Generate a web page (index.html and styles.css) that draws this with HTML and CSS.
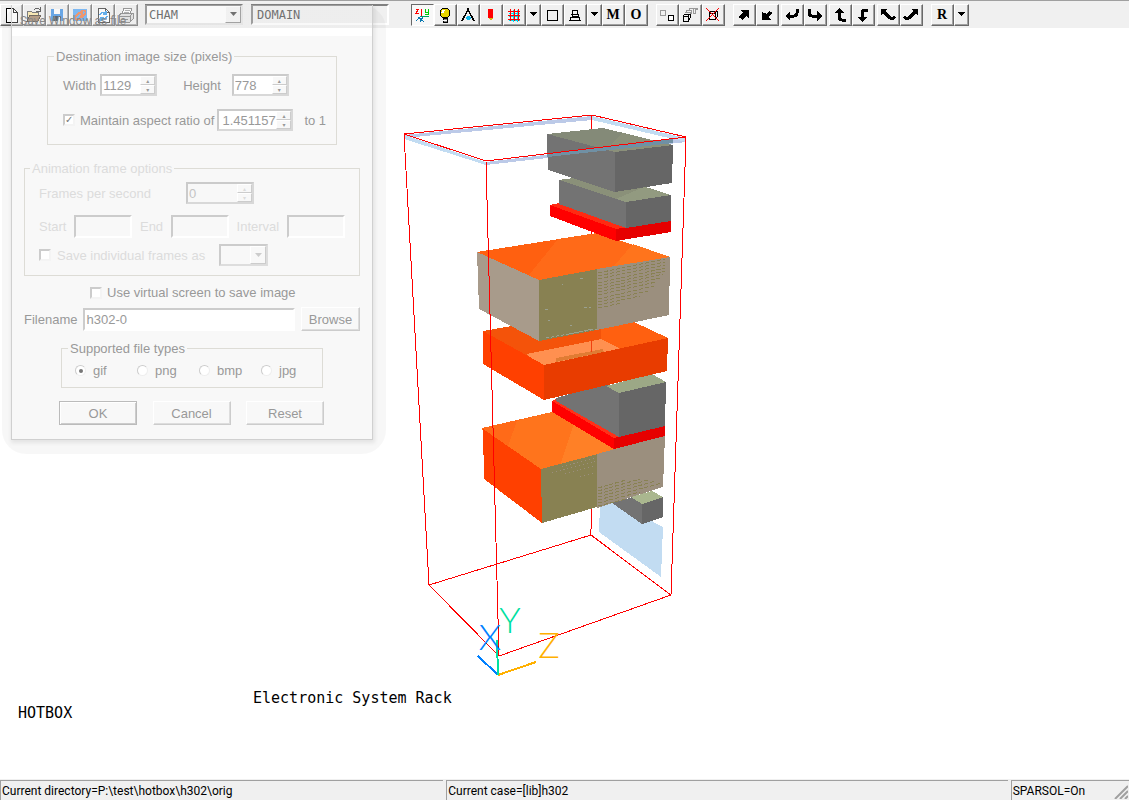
FILE: index.html
```html
<!DOCTYPE html>
<html lang="en">
<head>
<meta charset="utf-8">
<title>HOTBOX - Electronic System Rack</title>
<link rel="stylesheet" href="styles.css">
</head>
<body>
<div class="app">
  <header class="toolbar">
    <div class="group">
      <button class="tool" aria-label="New"><svg viewBox="0 0 16 16"><path d="M3 1h7l4 4v10H3z" fill="#fff" stroke="#000"/><path d="M10 1v4h4" fill="none" stroke="#000"/></svg></button>
      <button class="tool" aria-label="Open"><svg viewBox="0 0 16 16"><path d="M1 14V4h4l1 1h6v3" fill="#fbe7a2" stroke="#555"/><path d="M1 14l3-6h11l-3 6z" fill="#a08060" stroke="#443a30"/><path d="M8 3q3-4 6 0M14 0v4h-4" fill="none" stroke="#333"/></svg></button>
      <button class="tool" aria-label="Save"><svg viewBox="0 0 16 16"><path d="M2 2h12v12H2z" fill="#398ee5"/><path d="M5 2h6v5H5z" fill="#fff"/><path d="M4 9h8v5H4z" fill="#23364a"/><path d="M9 10h2v4H9z" fill="#fff"/></svg></button>
      <button class="tool" aria-label="Save window as image"><svg viewBox="0 0 16 16"><path d="M1 2h14v12H1z" fill="#55a6f6"/><path d="M4 9l3-3q2-2 3 0t-1 3l-2 3q-2 2-3 0t0-3zM7 7l3-3q2-1 3 0t0 3l-4 4" fill="none" stroke="#f07840" stroke-width="1.500"/></svg></button>
      <button class="tool" aria-label="Reload"><svg viewBox="0 0 16 16"><path d="M3 1h7l4 4v10H3z" fill="#fff" stroke="#333"/><path d="M10 1v4h4" fill="none" stroke="#333"/><path d="M5 8q1-4 5-2M11 4v3H8M12 9q-1 4-5 3M6 14v-3h3" fill="none" stroke="#3198ee" stroke-width="1.5"/></svg></button>
      <button class="tool" aria-label="Print"><svg viewBox="0 0 16 16"><path d="M4 7l2-6h8l-2 6z" fill="#fff" stroke="#777"/><path d="M7 3h5M6 5h5" stroke="#999"/><path d="M1 8l3-2h11v6l-3 3H1z" fill="#ddd" stroke="#777"/><path d="M1 9h11v6M12 9l3-3M3 12h7" fill="none" stroke="#777"/></svg></button>
    </div>
    <div class="combo">
      <select aria-label="Domain owner"><option>CHAM</option></select>
      <span class="combo-arrow"><svg viewBox="0 0 9 5"><path d="M1 0h7L4.500 4z"/></svg></span>
    </div>
    <input class="object-name" type="text" value="DOMAIN" aria-label="Object name">
    <div class="group">
      <button class="tool pressed" aria-label="Axes"><svg viewBox="0 0 16 16"><path d="M2 2h3L2 6h3" fill="none" stroke="#f00"/><path d="M7 2v7" stroke="#f00"/><path d="M7 9h8" stroke="#00a060"/><path d="M11 2v3h3M14 2v5h-3" fill="none" stroke="#0c0"/><path d="M7 9l-5 5M4 10l6 5M9 10l-3 5" stroke="#0878b0"/></svg></button>
      <button class="tool" aria-label="Light"><svg viewBox="0 0 16 16"><circle cx="8" cy="6" r="5" fill="#e8d400" stroke="#000"/><path d="M7 3l-2 3" stroke="#fff" stroke-width="2"/><path d="M6 11h4v4H6z" fill="#888" stroke="#000"/><path d="M6 13h4" stroke="#fff"/></svg></button>
      <button class="tool" aria-label="Compass"><svg viewBox="0 0 16 16"><path d="M2 14l2-4 4-7 4 7 2 4" fill="none" stroke="#000" stroke-width="1.500"/><path d="M5 11q3-4 6 0l-2 2H7z" fill="#14b8e8"/><path d="M7 1h2v3H7z"/></svg></button>
      <button class="tool" aria-label="Pencil"><svg viewBox="0 0 16 16"><path d="M5 2h5v9H5z" fill="#f00"/><path d="M5 11h5l-2 3z" fill="#d8b818"/></svg></button>
      <button class="tool" aria-label="Mesh"><svg viewBox="0 0 16 16"><path d="M3 6h11M3 9h11M3 13h11M7 3v12M11 3v12" stroke="#00dcf0"/><path d="M4 2v12M8 2v12M12 2v12M2 4h12M2 8h12M2 12h12" stroke="#f00"/></svg></button>
      <button class="tool drop" aria-label="Mesh options"><svg viewBox="0 0 9 5"><path d="M1 0h7L4.500 4z"/></svg></button>
      <button class="tool" aria-label="Box"><svg viewBox="0 0 16 16"><path d="M3 3h10v10H3z" fill="none" stroke="#000"/></svg></button>
      <button class="tool" aria-label="Perspective"><svg viewBox="0 0 16 16"><path d="M6 3h4l1 4H5zM5 7v2h6V7M4 10h8l1 3H3z" fill="none" stroke="#000"/></svg></button>
      <button class="tool drop" aria-label="Perspective options"><svg viewBox="0 0 9 5"><path d="M1 0h7L4.500 4z"/></svg></button>
      <button class="tool letter">M</button>
      <button class="tool letter">O</button>
    </div>
    <div class="group spaced">
      <button class="tool" aria-label="Duplicate"><svg viewBox="0 0 16 16"><path d="M1 3h5v5H1z" fill="none" stroke="#999"/><path d="M9 8h5v5H9z" fill="#fff" stroke="#000"/></svg></button>
      <button class="tool" aria-label="Array"><svg viewBox="0 0 16 16"><path d="M4 5V3h5v4M7 3V1h8v1h-2v4h-2M11 2v5M3 5h5v2" fill="none" stroke="#999"/><path d="M1 9h5v5H1zM1 9l2-2h5v4l-2 3M6 9l2-2" fill="none" stroke="#000"/></svg></button>
      <button class="tool" aria-label="Delete"><svg viewBox="0 0 16 16"><path d="M4 6h6v6H4zM4 6l2-2h6v6l-2 2M10 6l2-2" fill="none" stroke="#000"/><path d="M1 1l13 13M14 1L1 14" stroke="#f00"/></svg></button>
    </div>
    <div class="group spaced">
      <button class="tool" aria-label="Move up right"><svg viewBox="0 0 16 16"><path d="M4 3h9v8l-3-2-4 4-1-2H3V9l4-3z"/></svg></button>
      <button class="tool" aria-label="Move down left"><svg viewBox="0 0 16 16"><path d="M3 5v8h9l-3-3 4-3V5h-2V3L8 7z"/></svg></button>
    </div>
    <div class="group tight">
      <button class="tool" aria-label="Rotate left"><svg viewBox="0 0 16 16"><path d="M13 2v4q0 3-3 3H4" fill="none" stroke="#000" stroke-width="3"/><path d="M1 9l5-5v10z"/></svg></button>
      <button class="tool" aria-label="Rotate right"><svg viewBox="0 0 16 16"><path d="M2 2v4q0 3 3 3h6" fill="none" stroke="#000" stroke-width="3"/><path d="M15 9l-5-5v10z"/></svg></button>
    </div>
    <div class="group tight">
      <button class="tool" aria-label="Rotate up"><svg viewBox="0 0 16 16"><path d="M7 4v6q0 3 3 3h4" fill="none" stroke="#000" stroke-width="3"/><path d="M7 1l5 5H2z"/></svg></button>
      <button class="tool" aria-label="Rotate down"><svg viewBox="0 0 16 16"><path d="M13 3h-3q-3 0-3 3v6" fill="none" stroke="#000" stroke-width="3"/><path d="M7 15l5-5H2z"/></svg></button>
    </div>
    <div class="group tight">
      <button class="tool" aria-label="Tilt left"><svg viewBox="0 0 16 16"><path d="M3 4l7 7q2 2 5-1" fill="none" stroke="#000" stroke-width="3"/><path d="M1 2h7L1 8z"/></svg></button>
      <button class="tool" aria-label="Tilt right"><svg viewBox="0 0 16 16"><path d="M13 4l-7 7q-2 2-5-1" fill="none" stroke="#000" stroke-width="3"/><path d="M15 2H8l7 6z"/></svg></button>
    </div>
    <div class="group spaced">
      <button class="tool letter">R</button>
      <button class="tool drop" aria-label="Reset options"><svg viewBox="0 0 9 5"><path d="M1 0h7L4.500 4z"/></svg></button>
    </div>
  </header>

  <main class="viewport">
    <svg class="scene" viewBox="0 28 1129 751" preserveAspectRatio="xMinYMin meet" role="img" aria-label="Electronic rack model">
      <!-- lid bands -->
      <path d="M404 135L592 116V120L404 138zM486 162L686 138V142L486 165z" fill="#bccae8"/>
      <path d="M592 116L686 138V142L592 120zM404 135L486 162V165L404 139z" fill="#c2dcf2"/>
      <path d="M592 115L591 535" stroke="#f00"/>
      <path d="M600 505L612 500L663 527L661 577L599 532z" fill="#c2dcf2"/>
      <!-- bottom unit -->
      <path d="M612 503L633 497L642 504V524z" fill="#737373"/>
      <path d="M642 504L663 497V517L642 524z" fill="#666"/>
      <path d="M631 497L652 491L663 497L642 504z" fill="#aab78f"/>
      <!-- lower card cage -->
      <path d="M482 428L552 412L600 410L665 437L541 472L483 431z" fill="#ff6a18"/>
      <path d="M517 421L552 412L665 437L541 470L508 446z" fill="#ff741c"/>
      <path d="M574 424L665 437L560 465z" fill="#ff8026"/>
      <path d="M483 429L541 469L542 523L484 479z" fill="#ff4000"/>
      <path d="M541 469L598 454L597 507L542 523z" fill="#888152"/>
      <path d="M597 454L665 435L663 487L597 508z" fill="#9b8f7e"/>
      <g class="grain" stroke="#888152">
        <path d="M598 488L626 480M598 491L640 479M598 494L648 480M598 497L656 481M598 500L662 483M598 503L640 492M598 506L626 499"/>
      </g>
      <path d="M552 473L596 461M565 474L596 466M580 477L596 473M562 467L596 458" stroke="#9b8f7e" stroke-dasharray="1 3"/>
      <!-- lower board and chassis -->
      <path d="M552 401L558 398L620 437L614 440L552 403z" fill="#ff3018"/>
      <path d="M552 401L614 438V449L552 412z" fill="#f00"/>
      <path d="M614 438L665 425V436L614 449z" fill="#e60000"/>
      <path d="M556 398L606 384L619 393V437L556 401z" fill="#737373"/>
      <path d="M619 393L666 382L665 426L619 437z" fill="#666"/>
      <path d="M606 386L652 374L666 382L619 393z" fill="#9ca886"/>
      <!-- open tray -->
      <path d="M483 331L512 326L600 310L634 322L668 338L544 367L483 333z" fill="#f4530a"/>
      <path d="M601 329L634 322L668 338L619 350L601 341z" fill="#ff6010"/>
      <path d="M526 354L601 339L619 348V350L543 367z" fill="#ff9050"/>
      <path d="M556 358L603 349L604 352L556 362z" fill="#e07c34"/>
      <path d="M591 340V352" stroke="#f04010"/>
      <path d="M483 331L544 365V400L483 364z" fill="#ff4000"/>
      <path d="M544 365L668 338L667 371L544 400z" fill="#e83c00"/>
      <!-- upper card cage -->
      <path d="M477 252L597 233L670 257L539 282z" fill="#ff6010"/>
      <path d="M558 239L597 233L670 257L539 282L529 275z" fill="#ff6a18"/>
      <path d="M633 244L670 257L613 267z" fill="#ff741c"/>
      <path d="M477 252L539 280V341L479 309z" fill="#a89b8b"/>
      <path d="M539 280L598 269L597 330L539 341z" fill="#888152"/>
      <path d="M597 269L670 257L669 315L597 330z" fill="#9b8f7e"/>
      <g class="grain" stroke="#888152">
        <path d="M598 273L665 259M598 276L665 262M598 279L665 265M598 283L665 268M598 286L665 271M598 289L663 274M598 292L660 278M598 295L656 282M598 299L654 286M598 302L648 291M598 305L640 296M598 308L622 303"/>
      </g>
      <path d="M562 284h1M580 278h4M545 309h3M548 320h2M584 307h7M570 325h2M546 338L597 329M569 334L592 329" stroke="#9aa090" stroke-dasharray="3 2"/>
      <!-- upper board -->
      <path d="M550 205L590 196L671 223L616 231L550 207z" fill="#ff2a12"/>
      <path d="M550 205L616 229V241L550 216z" fill="#f00"/>
      <path d="M616 229L671 221V232L616 241z" fill="#e60000"/>
      <!-- second chassis -->
      <path d="M558 180L605 174L671 195L626 204z" fill="#8a9079"/>
      <path d="M644 187L671 195L626 204L616 199z" fill="#929a80"/>
      <path d="M559 180L626 202V228L559 204z" fill="#737373"/>
      <path d="M626 202L671 195V221L626 228z" fill="#666"/>
      <!-- top chassis -->
      <path d="M547 134L603 128L673 145L615 154z" fill="#848a78"/>
      <path d="M623 133L673 145L615 154L606 149z" fill="#8b907a"/>
      <path d="M547 134L615 152V192L548 170z" fill="#737373"/>
      <path d="M615 152L673 145L672 183L615 192z" fill="#666"/>
      <path d="M547 154L673 139V143L547 157z" fill="#7090a4"/>
      <!-- domain outline -->
      <path d="M404 134L592 115L686 137L486 161zM404 134L429 585L591 535L671 595L499 656L429 585M486 161L499 656M686 137L671 595" fill="none" stroke="#f00"/>
      <!-- axis triad -->
      <g stroke-width="2">
        <path d="M498 675L478 656" stroke="#0080ff"/>
        <path d="M498 675L536 662" stroke="#ffb000"/>
        <path d="M498 675L497 640" stroke="#00e0a0"/>
      </g>
      <g class="axis-names">
        <text x="490" y="650" fill="#0080ff">X</text>
        <text x="510" y="633" fill="#00e0a0">Y</text>
        <text x="549" y="658" fill="#ffb000">Z</text>
      </g>
    </svg>
    <p class="label model-title">Electronic System Rack</p>
    <p class="label case-title">HOTBOX</p>
  </main>

  <footer class="status">
    <div class="pane directory">Current directory=P:\test\hotbox\h302\orig</div>
    <div class="pane case">Current case=[lib]h302</div>
    <div class="pane solver"><span>SPARSOL=On</span><svg class="grip" viewBox="0 0 14 14"><path d="M1 14L14 1M6 14L14 6M11 14L14 11" stroke="#a0a0a0" stroke-width="2"/></svg></div>
  </footer>
</div>

<div class="shadow">
  <form class="dialog" aria-labelledby="dialog-title">
    <h1 class="title" id="dialog-title">Save Window as file</h1>
    <div class="body">
      <fieldset class="size">
        <legend>Destination image size (pixels)</legend>
        <div class="row">
          <label for="width">Width</label>
          <span class="spin"><input id="width" type="text" value="1129"><span class="arrows"><button type="button" aria-label="Increase width">▴</button><button type="button" aria-label="Decrease width">▾</button></span></span>
          <label class="height-label" for="height">Height</label>
          <span class="spin"><input id="height" type="text" value="778"><span class="arrows"><button type="button" aria-label="Increase height">▴</button><button type="button" aria-label="Decrease height">▾</button></span></span>
        </div>
        <div class="row ratio-row">
          <label class="check"><input type="checkbox" checked>Maintain aspect ratio of</label>
          <span class="spin ratio"><input type="text" value="1.451157" aria-label="Aspect ratio"><span class="arrows"><button type="button" aria-label="Increase ratio">▴</button><button type="button" aria-label="Decrease ratio">▾</button></span></span>
          <span class="to-one">to 1</span>
        </div>
      </fieldset>

      <fieldset class="animation" disabled>
        <legend>Animation frame options</legend>
        <div class="row">
          <label class="fps-label" for="fps">Frames per second</label>
          <span class="spin fps"><input id="fps" type="text" value="0"><span class="arrows"><button type="button" aria-label="Increase frames">▴</button><button type="button" aria-label="Decrease frames">▾</button></span></span>
        </div>
        <div class="row range">
          <label for="start">Start</label><input class="field" id="start" type="text">
          <label for="end">End</label><input class="field" id="end" type="text">
          <label for="interval">Interval</label><input class="field" id="interval" type="text">
        </div>
        <div class="row">
          <label class="check"><input type="checkbox">Save individual frames as</label>
          <span class="combo small"><select aria-label="Frame format"><option></option></select><span class="combo-arrow"><svg viewBox="0 0 9 5"><path d="M1 0h7L4.500 4z"/></svg></span></span>
        </div>
      </fieldset>

      <label class="check virtual"><input type="checkbox">Use virtual screen to save image</label>

      <div class="row file">
        <label for="filename">Filename</label>
        <input class="field" id="filename" type="text" value="h302-0">
        <button class="push" type="button">Browse</button>
      </div>

      <fieldset class="types">
        <legend>Supported file types</legend>
        <div class="row">
          <label><input type="radio" name="type" checked>gif</label>
          <label><input type="radio" name="type">png</label>
          <label><input type="radio" name="type">bmp</label>
          <label><input type="radio" name="type">jpg</label>
        </div>
      </fieldset>

      <div class="actions">
        <button class="push default" type="button">OK</button>
        <button class="push" type="button">Cancel</button>
        <button class="push" type="button">Reset</button>
      </div>
    </div>
  </form>
</div>
</body>
</html>
```

FILE: styles.css
```css
* { box-sizing: border-box; }

body {
  margin: 0;
  background: #fff;
  color: #000;
  font: 12px/16px Roboto, "Noto Sans", sans-serif;
}

button, input, select { font: inherit; color: inherit; margin: 0; }

.app { display: flex; flex-direction: column; min-height: 100vh; }

/* Toolbar */
.toolbar {
  display: flex;
  align-items: flex-start;
  height: 28px;
  padding-top: 3px;
  background: #f0f0f0;
  border-top: 1px solid #a0a0a0;
}

.group { display: flex; }
.group.spaced { margin-left: 8px; }
.group.tight { margin-left: 2px; }

.tool {
  display: flex;
  align-items: center;
  justify-content: center;
  width: 23px;
  height: 22px;
  padding: 0 1px 1px 0;
  background: #f0f0f0;
  border: 1px solid;
  border-color: #fff #696969 #696969 #fff;
  box-shadow: inset -1px -1px #a0a0a0;
}

.tool svg { width: 16px; height: 16px; shape-rendering: crispEdges; }
.tool.drop { width: 15px; }
.tool.drop svg { width: 9px; height: 5px; }
.tool.pressed { background: #f8f8f8; border-color: #696969 #fff #fff #696969; box-shadow: none; }
.tool.letter { font: bold 14px/16px "Liberation Serif", serif; }

.combo {
  display: flex;
  position: relative;
  width: 98px;
  height: 21px;
  margin: 0 8px 0 7px;
  background: #fff;
  border: 2px solid;
  border-color: #808080 #e4e4e4 #e4e4e4 #808080;
}

.combo select {
  width: 100%;
  padding: 0 2px;
  appearance: none;
  background: transparent;
  border: 0;
  border-radius: 0;
  font: 12px/16px "DejaVu Sans Mono", monospace;
  color: #444;
  opacity: 1;
}

.combo-arrow {
  position: absolute;
  top: 0;
  right: 0;
  bottom: 0;
  display: flex;
  align-items: center;
  justify-content: center;
  width: 16px;
  background: #f4f4f4;
  border: 1px solid;
  border-color: #fff #888 #888 #fff;
  pointer-events: none;
}

.combo-arrow svg { width: 9px; height: 5px; fill: #444; }

.object-name {
  width: 138px;
  height: 21px;
  margin-right: 22px;
  padding: 0 4px;
  background: #f0f0f0;
  border: 2px solid;
  border-color: #808080 #fff #fff #808080;
  font: 12px/16px "DejaVu Sans Mono", monospace;
  color: #444;
}

/* Model view */
.viewport { position: relative; flex: 1; }
.scene { display: block; width: 100%; shape-rendering: crispEdges; }
.grain { stroke-dasharray: 4 2; }
.axis-names { font: 300 36px Lato, sans-serif; text-anchor: middle; }

.label {
  position: absolute;
  margin: 0;
  font: 15px/18px "DejaVu Sans Mono", monospace;
}

.model-title { left: 253px; top: 661px; }
.case-title { left: 18px; top: 676px; }

/* Status bar */
.status {
  display: flex;
  gap: 3px;
  height: 21px;
  padding-top: 1px;
  background: #f0f0f0;
}

.pane {
  display: flex;
  justify-content: space-between;
  padding: 1px;
  border-top: 1px solid #a0a0a0;
  border-left: 1px solid #a0a0a0;
  line-height: 18px;
  white-space: nowrap;
}

.directory { flex: 443 1 0; }
.case { flex: 562 1 0; }
.solver { flex: 116 1 0; }
.grip { align-self: flex-end; width: 14px; height: 14px; }

/* Fading dialog */
.shadow {
  position: absolute;
  left: 2px;
  top: 5px;
  padding: 0 13px 14px 9px;
  background: rgba(0, 0, 0, 0.03);
  border-radius: 24px;
}

.dialog {
  width: 362px;
  border: 1px solid #d0d0d0;
  border-top: 0;
  box-shadow: 1px 2px 4px 1px rgba(0, 0, 0, 0.08);
  color: #999;
  font: 13px/15px "Liberation Sans", sans-serif;
  white-space: nowrap;
}

.title {
  height: 31px;
  margin: 0;
  padding: 8px;
  background: linear-gradient(rgba(255, 255, 255, 0.25) 23px, #fff 23px);
  font: 12px/16px Roboto, sans-serif;
  color: #888;
}

.body { padding: 13px 12px 14px; background: #f8f8f8; }
.row { display: flex; align-items: center; }

fieldset {
  min-width: 0;
  margin: 0;
  padding: 0 15px;
  border: 1px solid #dddcd6;
}

legend { padding: 0 2px; margin-left: -9px; }

.size { width: 290px; height: 96px; margin-left: 23px; }
.size .row { gap: 4px; margin-top: 10px; }
.size .height-label { margin-left: 22px; margin-right: 7px; }
.size .ratio-row { gap: 3px; margin-top: 13px; }
.to-one { margin-left: 8px; }

.spin {
  display: flex;
  flex: none;
  width: 57px;
  height: 22px;
  background: #fff;
  border: 2px solid;
  border-color: #cbcbcb #d8d8d8 #d8d8d8 #cbcbcb;
}

.spin.ratio { width: 76px; }
.spin input { width: 0; flex: 1; padding: 0 0 0 1px; border: 0; background: transparent; }
.spin.ratio input { padding-left: 3px; }
.arrows { display: flex; flex-direction: column; width: 15px; }

.arrows button {
  flex: 1;
  height: 9px;
  padding: 0;
  background: #f8f8f8;
  border: 1px solid;
  border-color: #fff #ccc #ccc #fff;
  font: 6px/6px "DejaVu Sans", sans-serif;
}

.check { display: flex; align-items: center; gap: 5px; }

input[type="checkbox"] {
  appearance: none;
  display: grid;
  place-items: center;
  width: 12px;
  height: 12px;
  background: #fff;
  border: 2px solid;
  border-color: #ccc #f4f4f4 #f4f4f4 #ccc;
}

input[type="checkbox"]:checked::before {
  content: "✓";
  color: #777;
  font: bold 10px/8px "DejaVu Sans", sans-serif;
}

.animation { width: 336px; height: 115px; margin-top: 16px; padding: 0 14px; color: #dcdcdc; }
.animation .spin, .animation .field, .animation .combo { background: #f8f8f8; }
.animation input { color: #c4c4c4; }
.animation .row { margin-top: 6px; }
.fps-label { width: 147px; }
.spin.fps { width: 68px; }
.animation .range { justify-content: space-between; margin-top: 11px; }
.animation .check { gap: 6px; }
.combo.small {
  width: 49px;
  height: 22px;
  margin: 0 0 0 14px;
  border-color: #ccc #ddd #ddd #ccc;
}

.small .combo-arrow { background: #f8f8f8; border-color: #fff #ccc #ccc #fff; }
.small svg { fill: #ccc; }

.field {
  width: 58px;
  height: 23px;
  padding: 0 1px;
  background: #fff;
  border: 2px solid;
  border-color: #ccc #fff #fff #ccc;
}

.virtual { margin: 9px 0 0 66px; }
.file { gap: 6px; margin-top: 7px; }
.file .field { flex: 1; }

.push {
  width: 78px;
  height: 24px;
  padding: 0;
  background: #f8f8f8;
  border: 1px solid;
  border-color: #fff #ccc #ccc #fff;
  box-shadow: inset -1px -1px #ddd;
}

.push.default { border-color: #bbb; box-shadow: inset 1px 1px #fff, inset -1px -1px #ccc; }
.file .push { width: 59px; }

.types { width: 262px; height: 47px; margin: 10px 0 0 37px; padding: 0 13px; }
.types legend { margin-left: -7px; }
.types .row { margin-top: 7px; }
.types label { display: flex; flex: none; align-items: center; gap: 7px; width: 62px; }

input[type="radio"] {
  appearance: none;
  display: grid;
  place-items: center;
  width: 11px;
  height: 11px;
  background: #fff;
  border: 1px solid;
  border-color: #ccc #eee #eee #ccc;
  border-radius: 50%;
}

input[type="radio"]:checked::before {
  content: "";
  width: 4px;
  height: 4px;
  background: #777;
  border-radius: 50%;
}

.actions { display: flex; justify-content: space-between; width: 265px; margin: 13px 0 0 35px; }
```
